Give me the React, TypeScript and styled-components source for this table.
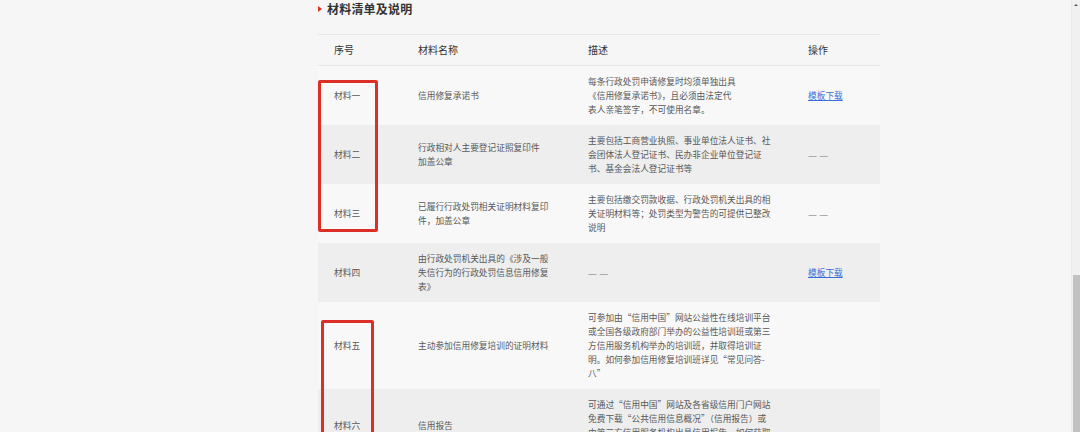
import React from "react";
import styled, { createGlobalStyle } from "styled-components";

const Global = createGlobalStyle`
  html, body { margin: 0; padding: 0; background: #f6f6f6; overflow: hidden; }
  body { font-family: "Noto Sans CJK SC", "Noto Sans", sans-serif; }
`;

const Page = styled.div`
  height: 432px;
  display: grid;
  grid-template-columns: 318px 562px 1fr 9px;
  overflow: hidden;
  background: #f6f6f6;
`;

const Spacer = styled.div``;

const Main = styled.div`
  position: relative;
  display: flex;
  flex-direction: column;
`;

const Title = styled.h3`
  margin: 0;
  padding-top: 1px;
  height: 33px;
  display: flex;
  align-items: flex-start;
  gap: 5px;
  font-size: 12px;
  line-height: 16px;
  font-weight: 700;
  color: #333;
  letter-spacing: 0.2px;
`;

const Triangle = styled.span`
  margin-top: 5px;
  width: 0;
  height: 0;
  border-top: 3px solid transparent;
  border-bottom: 3px solid transparent;
  border-left: 4px solid #d8342c;
`;

const Grid = styled.div<{ $bg?: string }>`
  display: grid;
  grid-template-columns: 84px 170px 220px 88px;
  background: ${(p) => p.$bg || "transparent"};
`;

const HeaderRow = styled(Grid)`
  height: 30px;
  border-top: 1px solid #e7e7e7;
  border-bottom: 1px solid #e7e7e7;
  align-items: center;
`;

const HeadCell = styled.div`
  padding-left: 16px;
  font-size: 10px;
  color: #333;
  line-height: 14px;
`;

const BodyRow = styled(Grid)`
  padding: 8.5px 0;
  align-items: center;
  flex-shrink: 0;
`;

const Cell = styled.div<{ $muted?: boolean }>`
  padding-left: 16px;
  font-size: ${(p) => (p.$muted ? "10px" : "8.7px")};
  line-height: 14px;
  color: ${(p) => (p.$muted ? "#9a9a9a" : "#585858")};
  white-space: pre-line;
`;

const Link = styled.a`
  color: #3a6ed8;
  text-decoration: underline;
  font-size: 8.7px;
  cursor: pointer;
`;

const Mark = styled.div<{ $left: number; $top: number; $w: number; $h: number }>`
  position: absolute;
  left: ${(p) => p.$left}px;
  top: ${(p) => p.$top}px;
  width: ${(p) => p.$w}px;
  height: ${(p) => p.$h}px;
  border: 3px solid #dc2f27;
  border-radius: 2px;
  box-sizing: border-box;
  pointer-events: none;
`;

const Scrollbar = styled.div`
  background: #f0f0f0;
  border-left: 1px solid #e9e9e9;
  display: flex;
  flex-direction: column;
  align-items: center;
`;

const Arrow = styled.span`
  margin-top: 4px;
  width: 0;
  height: 0;
  border-left: 2px solid transparent;
  border-right: 2px solid transparent;
  border-bottom: 2px solid #555;
`;

const Thumb = styled.div`
  margin-top: 269px;
  width: 7px;
  flex: 1;
  background: #c1c1c1;
`;

type Row = {
  no: string;
  name: string;
  desc: string | null;
  op: "link" | "dash" | null;
};

const rows: Row[] = [
  {
    no: "材料一",
    name: "信用修复承诺书",
    desc: "每条行政处罚申请修复时均须单独出具\n《信用修复承诺书》，且必须由法定代\n表人亲笔签字，不可使用名章。",
    op: "link",
  },
  {
    no: "材料二",
    name: "行政相对人主要登记证照复印件\n加盖公章",
    desc: "主要包括工商营业执照、事业单位法人证书、社\n会团体法人登记证书、民办非企业单位登记证\n书、基金会法人登记证书等",
    op: "dash",
  },
  {
    no: "材料三",
    name: "已履行行政处罚相关证明材料复印\n件，加盖公章",
    desc: "主要包括缴交罚款收据、行政处罚机关出具的相\n关证明材料等；处罚类型为警告的可提供已整改\n说明",
    op: "dash",
  },
  {
    no: "材料四",
    name: "由行政处罚机关出具的《涉及一般\n失信行为的行政处罚信息信用修复\n表》",
    desc: null,
    op: "link",
  },
  {
    no: "材料五",
    name: "主动参加信用修复培训的证明材料",
    desc: "可参加由“信用中国”网站公益性在线培训平台\n或全国各级政府部门举办的公益性培训班或第三\n方信用服务机构举办的培训班，并取得培训证\n明。如何参加信用修复培训班详见“常见问答-\n八”",
    op: null,
  },
  {
    no: "材料六",
    name: "信用报告",
    desc: "可通过“信用中国”网站及各省级信用门户网站\n免费下载“公共信用信息概况”（信用报告）或\n由第三方信用服务机构出具信用报告，如何获取\n信用报告详见“常见问答-九”",
    op: null,
  },
];

export default function App() {
  return (
    <>
      <Global />
      <Page>
        <Spacer />
        <Main>
          <Title>
            <Triangle />
            材料清单及说明
          </Title>
          <HeaderRow>
            <HeadCell>序号</HeadCell>
            <HeadCell>材料名称</HeadCell>
            <HeadCell>描述</HeadCell>
            <HeadCell>操作</HeadCell>
          </HeaderRow>
          {rows.map((r, i) => (
            <BodyRow key={r.no} $bg={i % 2 === 0 ? "#f8f8f9" : "#eeeeee"}>
              <Cell>{r.no}</Cell>
              <Cell>{r.name}</Cell>
              {r.desc ? <Cell>{r.desc}</Cell> : <Cell $muted>— —</Cell>}
              {r.op === "link" ? (
                <Cell>
                  <Link>模板下载</Link>
                </Cell>
              ) : r.op === "dash" ? (
                <Cell $muted>— —</Cell>
              ) : (
                <Cell />
              )}
            </BodyRow>
          ))}
          <Mark $left={0} $top={80} $w={60} $h={152} />
          <Mark $left={3} $top={320} $w={53} $h={140} />
        </Main>
        <Spacer />
        <Scrollbar>
          <Arrow />
          <Thumb />
        </Scrollbar>
      </Page>
    </>
  );
}
